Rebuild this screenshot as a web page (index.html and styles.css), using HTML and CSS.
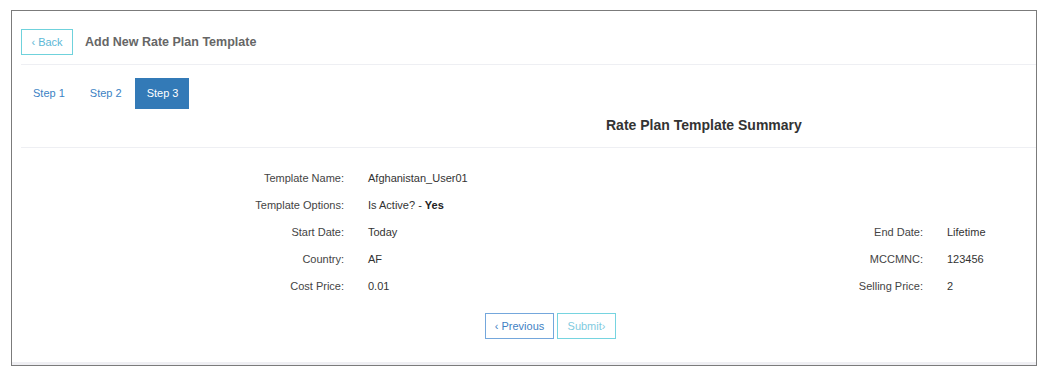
FILE: index.html
```html
<!DOCTYPE html>
<html>
<head>
<meta charset="utf-8">
<link rel="stylesheet" href="styles.css">
</head>
<body>
<div class="panel">
  <div class="header">
    <button class="btn btn-back">&lsaquo; Back</button>
    <h1 class="title">Add New Rate Plan Template</h1>
  </div>
  <div class="body">
    <ul class="tabs">
      <li class="tab">Step 1</li>
      <li class="tab">Step 2</li>
      <li class="tab active">Step 3</li>
    </ul>
    <h2 class="summary-title">Rate Plan Template Summary</h2>
  </div>
  <div class="details">
    <div class="row">
      <div class="label">Template Name:</div><div class="value">Afghanistan_User01</div>
      <div class="label"></div><div class="value"></div>
    </div>
    <div class="row">
      <div class="label">Template Options:</div><div class="value">Is Active? - <b>Yes</b></div>
      <div class="label"></div><div class="value"></div>
    </div>
    <div class="row">
      <div class="label">Start Date:</div><div class="value">Today</div>
      <div class="label">End Date:</div><div class="value">Lifetime</div>
    </div>
    <div class="row">
      <div class="label">Country:</div><div class="value">AF</div>
      <div class="label">MCCMNC:</div><div class="value">123456</div>
    </div>
    <div class="row">
      <div class="label">Cost Price:</div><div class="value">0.01</div>
      <div class="label">Selling Price:</div><div class="value">2</div>
    </div>
    <div class="actions">
      <button class="btn btn-prev">&lsaquo; Previous</button>
      <button class="btn btn-submit">Submit&rsaquo;</button>
    </div>
  </div>
</div>
</body>
</html>
```
FILE: styles.css
```css
* { box-sizing: border-box; }
html, body { margin: 0; padding: 0; background: #fff; }
body {
  font-family: "Liberation Sans", Arial, sans-serif;
  font-size: 11px;
  color: #333;
}
.panel {
  margin: 10px 0 0 11px;
  width: 1026px;
  height: 356px;
  border: 1px solid #7b7b7b;
  background: #fff;
  box-shadow: inset 0 -3px 0 #efeff3;
}
.header {
  display: flex;
  align-items: center;
  padding: 18px 0 9px 0;
  margin-left: 9px;
  border-bottom: 1px solid #eeeff3;
}
.btn {
  font-family: "Liberation Sans", Arial, sans-serif;
  font-size: 11px;
  background: #fff;
  height: 26px;
  padding: 0;
  margin: 0;
  cursor: pointer;
}
.btn-back {
  width: 52px;
  border: 1px solid #6fd2dc;
  color: #5cb8d6;
}
.title {
  margin: 0 0 0 12px;
  font-size: 12.5px;
  font-weight: bold;
  color: #666;
}
.body {
  margin-left: 9px;
  border-bottom: 1px solid #eeeff3;
}
.tabs {
  list-style: none;
  margin: 13px 0 0 0;
  padding: 0;
  display: flex;
  gap: 2px;
}
.tab {
  height: 31px;
  line-height: 31px;
  padding: 0 11px 0 12px;
  white-space: nowrap;
  color: #3b82c4;
}
.tab.active {
  background: #337ab7;
  color: #fff;
}
.summary-title {
  margin: 6px 0 12px 585px;
  font-size: 14px;
  line-height: 20px;
  font-weight: bold;
  color: #333;
}
.details {
  margin-left: 9px;
  padding-top: 17px;
}
.row {
  display: grid;
  grid-template-columns: 323px 356px 223px 1fr;
  height: 27px;
  line-height: 27px;
}
.label {
  text-align: right;
  color: #444;
}
.value {
  padding-left: 24px;
  color: #333;
}
.value b { color: #222; }
.actions {
  display: flex;
  gap: 3px;
  margin: 13px 0 0 464px;
}
.btn-prev {
  width: 69px;
  border: 1px solid #74a7dc;
  color: #3f7fc4;
}
.btn-submit {
  width: 59px;
  border: 1px solid #76d4e0;
  color: #7fcbe0;
}
```
